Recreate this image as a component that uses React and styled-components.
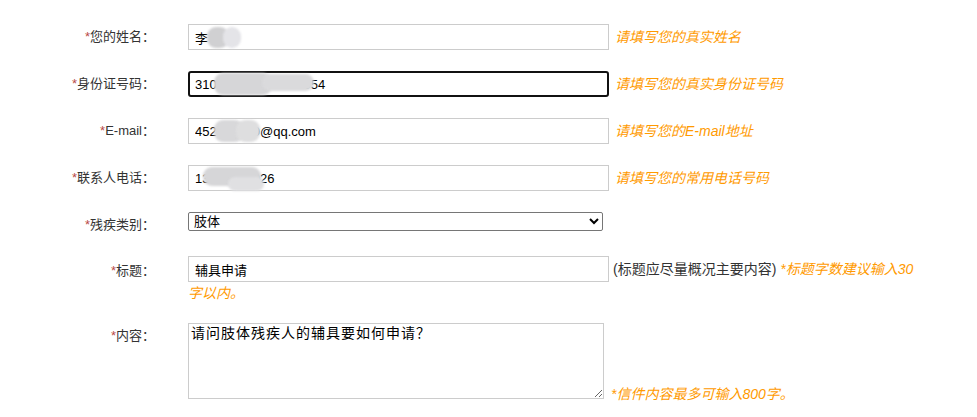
import React from "react";
import styled, { createGlobalStyle } from "styled-components";

const GlobalStyle = createGlobalStyle`
  body {
    margin: 0;
    background: #fff;
    font-family: "Liberation Sans", "Noto Sans CJK SC", sans-serif;
    color: #333;
  }
`;

const Form = styled.form`
  display: flex;
  flex-direction: column;
  gap: 21px;
  padding-top: 24px;
`;

const Row = styled.div`
  display: grid;
  grid-template-columns: 155px 737px;
  column-gap: 33px;
  align-items: start;
  margin-top: ${(p) => p.$shift || 0}px;
`;

const Label = styled.label`
  padding-top: ${(p) => p.$top || 0}px;
  text-align: right;
  font-size: 13px;
  line-height: 26px;
  color: #333;
  white-space: nowrap;
`;

const Star = styled.span`
  color: #b94a48;
`;

const Field = styled.div`
  font-size: 14px;
  line-height: 20px;
`;

const InputBox = styled.span`
  position: relative;
  display: inline-block;
  vertical-align: middle;
`;

const TextInput = styled.input`
  display: block;
  box-sizing: border-box;
  width: 421px;
  height: 26px;
  margin: 0;
  padding: 0 ${(p) => (p.$focused ? 5 : 6)}px;
  border: ${(p) => (p.$focused ? "2px solid #111" : "1px solid #ccc")};
  border-radius: ${(p) => (p.$focused ? 3 : 0)}px;
  font-family: "Liberation Sans", "Noto Sans CJK SC", sans-serif;
  font-size: 13px;
  color: #000;
  outline: none;
`;

const Blur = styled.span`
  position: absolute;
  left: ${(p) => p.$x}px;
  top: ${(p) => p.$y}px;
  width: ${(p) => p.$w}px;
  height: ${(p) => p.$h}px;
  border-radius: 9px;
  background: ${(p) => p.$bg || "#d6d6d8"};
  filter: blur(1.2px);
`;

const Hint = styled.span`
  margin-left: ${(p) => p.$gap ?? 6}px;
  color: #ff9a00;
  font-style: italic;
  font-size: 14px;
  vertical-align: ${(p) => p.$valign || "middle"};
`;

const Note = styled.span`
  margin-left: 4px;
  color: #333;
  font-size: 14px;
  vertical-align: middle;
`;

const Select = styled.select`
  display: block;
  box-sizing: border-box;
  width: 415px;
  height: 19px;
  margin: 0;
  padding: 0 0 0 1px;
  border: 1px solid #767676;
  border-radius: 2px;
  background: #fff;
  font-family: "Liberation Sans", "Noto Sans CJK SC", sans-serif;
  font-size: 13px;
  color: #000;
`;

const TextArea = styled.textarea`
  box-sizing: border-box;
  width: 416px;
  height: 76px;
  margin: 0;
  padding: 0 2px;
  border: 1px solid #ccc;
  font-family: "Noto Sans CJK SC", sans-serif;
  font-size: 14px;
  letter-spacing: 1px;
  line-height: 16px;
  color: #000;
  resize: both;
  outline: none;
`;

const rows = [
  {
    label: "您的姓名：",
    value: "李",
    hint: "请填写您的真实姓名",
    blurs: [
      { x: 19, y: 3, w: 22, h: 21, bg: "#d0d0d2" },
      { x: 35, y: 3, w: 18, h: 21, bg: "#e4e4e8" },
    ],
  },
  {
    label: "身份证号码：",
    value: "310000000000000054",
    hint: "请填写您的真实身份证号码",
    focused: true,
    blurs: [
      { x: 26, y: 2, w: 58, h: 22, bg: "#d6d6d8" },
      { x: 74, y: 3, w: 52, h: 17, bg: "#dadadc" },
    ],
  },
  {
    label: "E-mail：",
    value: "452000000@qq.com",
    hint: "请填写您的E-mail地址",
    blurs: [
      { x: 26, y: 2, w: 30, h: 22, bg: "#d8d8da" },
      { x: 48, y: 2, w: 24, h: 22, bg: "#dededf" },
    ],
  },
  {
    label: "联系人电话：",
    value: "13000000026",
    hint: "请填写您的常用电话号码",
    blurs: [
      { x: 15, y: 2, w: 58, h: 19, bg: "#d6d6d8" },
      { x: 40, y: 12, w: 36, h: 14, bg: "#e0e0e2" },
    ],
  },
];

export default function App() {
  return (
    <>
      <GlobalStyle />
      <Form onSubmit={(e) => e.preventDefault()}>
        {rows.map((row) => (
          <Row key={row.label}>
            <Label>
              <Star>*</Star>
              {row.label}
            </Label>
            <Field>
              <InputBox>
                <TextInput defaultValue={row.value} $focused={row.focused} />
                {row.blurs.map((b, i) => (
                  <Blur key={i} $x={b.x} $y={b.y} $w={b.w} $h={b.h} $bg={b.bg} />
                ))}
              </InputBox>
              <Hint>{row.hint}</Hint>
            </Field>
          </Row>
        ))}

        <Row>
          <Label>
            <Star>*</Star>残疾类别：
          </Label>
          <Field>
            <Select defaultValue="肢体">
              <option>视力</option>
              <option>听力</option>
              <option>言语</option>
              <option>肢体</option>
              <option>智力</option>
              <option>精神</option>
            </Select>
          </Field>
        </Row>

        <Row $shift={-3}>
          <Label $top={2}>
            <Star>*</Star>标题：
          </Label>
          <Field>
            <InputBox>
              <TextInput defaultValue="辅具申请" />
            </InputBox>
            <Note>(标题应尽量概况主要内容)</Note> <Hint $gap={0}>*标题字数建议输入30字以内。</Hint>
          </Field>
        </Row>

        <Row $shift={-1}>
          <Label>
            <Star>*</Star>内容：
          </Label>
          <Field>
            <TextArea defaultValue="请问肢体残疾人的辅具要如何申请？" />
            <Hint $gap={7} $valign="baseline">*信件内容最多可输入800字。</Hint>
          </Field>
        </Row>
      </Form>
    </>
  );
}
